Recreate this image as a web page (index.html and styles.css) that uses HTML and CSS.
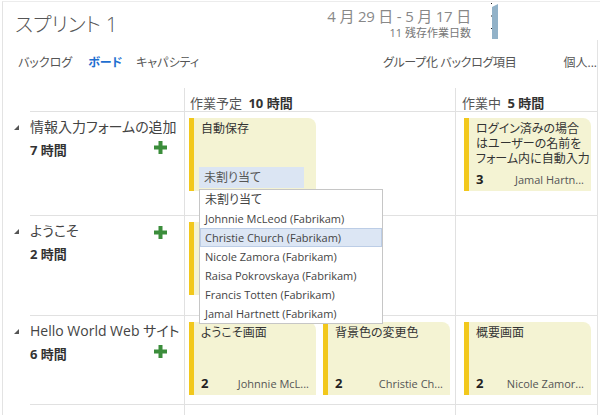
FILE: index.html
```html
<!DOCTYPE html>
<html lang="ja">
<head>
<meta charset="utf-8">
<title>スプリント 1</title>
<link rel="stylesheet" href="styles.css">
</head>
<body>
<div class="page">
  <header class="top">
    <h1 class="title">スプリント 1</h1>
    <div class="dates">
      <div class="range">4 月 29 日 - 5 月 17 日</div>
      <div class="remain">11 残存作業日数</div>
    </div>
    <div class="chart">
      <svg width="110" height="38" viewBox="0 0 110 38">
        <line x1="1.5" y1="1" x2="1.5" y2="38" stroke="#222" stroke-width="1" stroke-dasharray="1 11.5"/>
        <polygon points="2,5 8,2 8,37 2,37" fill="#92b2c8"/>
      </svg>
    </div>
  </header>
  <div class="body">
    <nav class="nav">
      <span class="tab">バックログ</span>
      <span class="tab active">ボード</span>
      <span class="tab">キャパシティ</span>
      <span class="opt group">グループ化 バックログ項目</span>
      <span class="opt person">個人...</span>
    </nav>
    <div class="board">
      <div class="row head">
        <div class="cell lab"></div>
        <div class="cell col2">作業予定 <b>10 時間</b></div>
        <div class="cell col3">作業中 <b>5 時間</b></div>
      </div>

      <div class="row r1">
        <div class="cell lab">
          <div class="lab-title"><svg class="tri" width="5" height="5" viewBox="0 0 5 5"><polygon points="5,0 5,5 0,5" fill="#555"/></svg><span>情報入力フォームの追加</span></div>
          <div class="lab-hours"><span>7 時間</span><svg class="plus lo" width="13" height="13" viewBox="0 0 13 13"><rect x="4.5" y="0" width="4" height="13" fill="#3b8d3b"/><rect x="0" y="4.5" width="13" height="4" fill="#3b8d3b"/></svg></div>
        </div>
        <div class="cell cards col2">
          <div class="card">
            <div class="card-title">自動保存</div>
            <div class="field">未割り当て
              <ul class="menu">
                <li>未割り当て</li>
                <li>Johnnie McLeod (Fabrikam)</li>
                <li class="hl">Christie Church (Fabrikam)</li>
                <li>Nicole Zamora (Fabrikam)</li>
                <li>Raisa Pokrovskaya (Fabrikam)</li>
                <li>Francis Totten (Fabrikam)</li>
                <li>Jamal Hartnett (Fabrikam)</li>
              </ul>
            </div>
          </div>
        </div>
        <div class="cell cards col3">
          <div class="card">
            <div class="card-title"><div>ログイン済みの場合</div><div>はユーザーの名前を</div><div>フォーム内に自動入力</div></div>
            <div class="card-foot"><span class="num">3</span><span class="who">Jamal Hartn...</span></div>
          </div>
        </div>
      </div>

      <div class="row r2">
        <div class="cell lab">
          <div class="lab-title"><svg class="tri" width="5" height="5" viewBox="0 0 5 5"><polygon points="5,0 5,5 0,5" fill="#555"/></svg><span>ようこそ</span><svg class="plus hi" width="13" height="13" viewBox="0 0 13 13"><rect x="4.5" y="0" width="4" height="13" fill="#3b8d3b"/><rect x="0" y="4.5" width="13" height="4" fill="#3b8d3b"/></svg></div>
          <div class="lab-hours"><span>2 時間</span></div>
        </div>
        <div class="cell cards col2">
          <div class="card"></div>
        </div>
        <div class="cell cards col3"></div>
      </div>

      <div class="row r3">
        <div class="cell lab">
          <div class="lab-title"><svg class="tri" width="5" height="5" viewBox="0 0 5 5"><polygon points="5,0 5,5 0,5" fill="#555"/></svg><span>Hello World Web サイト</span></div>
          <div class="lab-hours"><span>6 時間</span><svg class="plus lo" width="13" height="13" viewBox="0 0 13 13"><rect x="4.5" y="0" width="4" height="13" fill="#3b8d3b"/><rect x="0" y="4.5" width="13" height="4" fill="#3b8d3b"/></svg></div>
        </div>
        <div class="cell cards col2">
          <div class="card">
            <div class="card-title">ようこそ画面</div>
            <div class="card-foot"><span class="num">2</span><span class="who">Johnnie McL...</span></div>
          </div>
          <div class="card">
            <div class="card-title">背景色の変更色</div>
            <div class="card-foot"><span class="num">2</span><span class="who">Christie Ch...</span></div>
          </div>
        </div>
        <div class="cell cards col3">
          <div class="card">
            <div class="card-title">概要画面</div>
            <div class="card-foot"><span class="num">2</span><span class="who">Nicole Zamor...</span></div>
          </div>
        </div>
      </div>

      <div class="row fill">
        <div class="cell lab"></div>
        <div class="cell col2"></div>
        <div class="cell col3"></div>
      </div>
    </div>
  </div>
</div>
</body>
</html>
```
FILE: styles.css
```css
* { box-sizing: border-box; margin: 0; padding: 0; }
html, body { background: #fff; }
body {
  width: 600px;
  height: 415px;
  overflow: hidden;
  font-family: "Open Sans", "Noto Sans CJK JP", sans-serif;
  font-feature-settings: "palt";
  color: #444;
}
.page {
  margin: 1px 0 0 2px;
  width: 598px;
  height: 414px;
  border-left: 1px solid #e3e3e3;
  border-top: 1px solid #ececec;
  display: flex;
  flex-direction: column;
}
.top { display: flex; height: 38px; flex: none; }
.title {
  font-size: 20px;
  font-weight: 300;
  line-height: 24px;
  color: #555;
  padding: 11px 0 0 12px;
}
.dates { margin-left: auto; margin-right: 19px; text-align: right; padding-top: 5px; }
.range { font-size: 15px; line-height: 19px; color: #888; white-space: nowrap; letter-spacing: -0.2px; }
.remain { font-size: 11px; line-height: 12px; margin-top: 1px; color: #777; }
.chart { width: 110px; height: 38px; }
.chart svg { display: block; }

.body {
  flex: 1;
  width: 595px;
  border-right: 1px solid #e3e3e3;
  display: flex;
  flex-direction: column;
}
.nav {
  display: flex;
  height: 48px;
  flex: none;
  padding: 15px 0 0 15px;
  font-size: 12px;
  line-height: 16px;
  color: #555;
}
.tab + .tab { margin-left: 16px; }
.tab:nth-child(3) { margin-left: 14px; }
.tab.active { color: #1f6fd0; font-weight: bold; }
.group { margin-left: auto; letter-spacing: -0.3px; }
.person { margin-left: 47px; white-space: nowrap; }

.board { flex: 1; display: flex; flex-direction: column; }
.row {
  display: grid;
  grid-template-columns: 154px 271px 1fr;
  margin-left: 27px;
  border-bottom: 1px solid #e1e1e1;
  flex: none;
}
.cell + .cell { border-left: 1px solid #e1e1e1; }
.head { height: 24px; }
.head .cell { font-size: 13px; line-height: 18px; padding-top: 6px; color: #555; white-space: nowrap; }
.head .cell b { color: #333; margin-left: 3px; }
.head .col2 { padding-left: 5px; }
.head .col3 { padding-left: 6px; }
.r1 { height: 104px; }
.r2 { height: 100px; }
.r3 { height: 89px; }
.fill { flex: 1; border-bottom: 0; }

.lab { padding: 5px 17px 0 0; }
.lab-title {
  display: flex;
  align-items: center;
  font-size: 14px;
  line-height: 20px;
  color: #444;
  white-space: nowrap;
}
.tri { margin-left: -16px; margin-right: 11px; flex: none; }
.lab-hours {
  display: flex;
  align-items: center;
  margin-top: 5px;
  font-size: 13px;
  line-height: 16px;
  font-weight: bold;
  color: #333;
}
.plus { margin-left: auto; flex: none; }
.plus.lo { margin-top: -6px; }
.plus.hi { margin-top: 2px; }

.cards {
  display: flex;
  flex-wrap: wrap;
  align-content: flex-start;
  gap: 7px;
  padding: 6px 0 0 4px;
}
.cards.col3 { padding-left: 8px; }
.card {
  position: relative;
  width: 127px;
  height: 73px;
  background: #f4f3d3;
  border-left: 5px solid #f2c81c;
  border-top-right-radius: 8px;
  padding: 3px 7px 3px 7px;
  display: flex;
  flex-direction: column;
}
.card-title {
  font-size: 12px;
  line-height: 15px;
  color: #333;
  white-space: nowrap;
}
.card-foot {
  margin-top: auto;
  display: flex;
  justify-content: space-between;
  align-items: baseline;
  line-height: 16px;
}
.num { font-size: 13px; font-weight: bold; color: #222; }
.who { font-size: 11px; color: #555; white-space: nowrap; }

.field {
  position: relative;
  margin: auto 0 0 -2px;
  width: 105px;
  height: 21px;
  background: #dbe5f3;
  font-size: 12px;
  line-height: 21px;
  padding-left: 5px;
  color: #555;
}
.menu {
  position: absolute;
  z-index: 5;
  top: 22px;
  left: 0;
  width: 184px;
  list-style: none;
  background: #fff;
  border: 1px solid #c6c6c6;
  font-size: 11px;
  line-height: 19px;
  color: #444;
}
.menu li { height: 19px; padding-left: 5px; white-space: nowrap; }
.menu li:first-child { font-size: 12px; }
.menu li.hl {
  background: #dce6f4;
  border: 1px solid #bccde6;
  line-height: 17px;
  padding-left: 4px;
}
```
